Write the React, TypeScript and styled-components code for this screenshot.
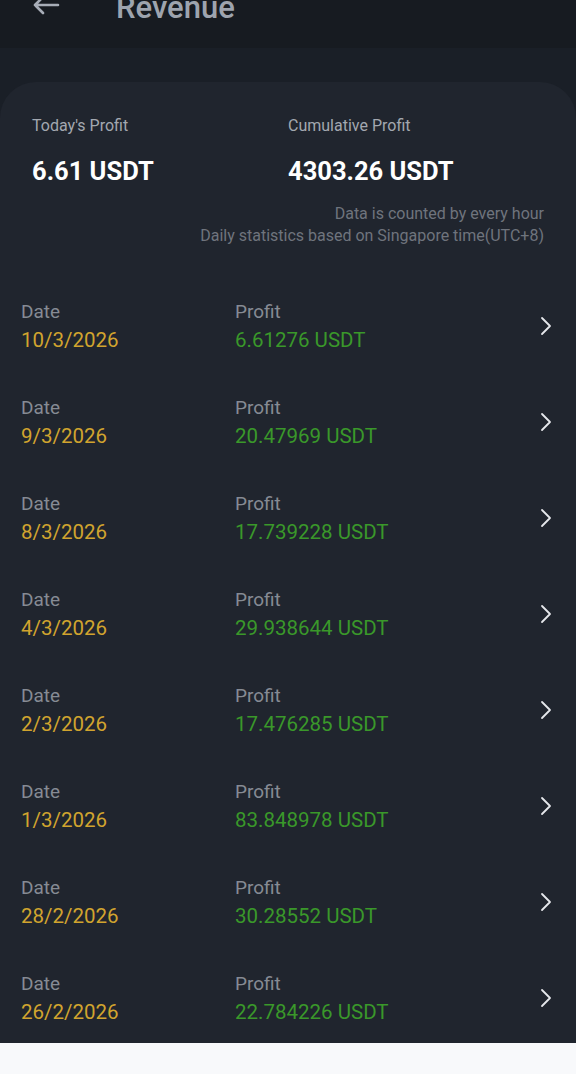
import React from "react";
import styled, { createGlobalStyle } from "styled-components";

const Global = createGlobalStyle`
  html, body { margin: 0; padding: 0; background: #f8f9fb; }
  body { font-family: Roboto, "Noto Sans", sans-serif; }
  * { box-sizing: border-box; }
`;

const Page = styled.div`
  width: 576px;
  background: #1a1f27;
  display: flex;
  flex-direction: column;
`;

const Header = styled.header`
  height: 48px;
  background: #171b21;
  display: flex;
  align-items: flex-start;
  padding-left: 32px;
`;

const BackIcon = styled.svg`
  width: 28px;
  height: 20px;
  margin-top: -5px;
  flex: none;
`;

const Title = styled.h1`
  margin: -8px 0 0 56px;
  font-size: 31px;
  line-height: 31px;
  font-weight: 500;
  color: #9ea4ae;
  white-space: nowrap;
`;

const Card = styled.section`
  margin-top: 34px;
  background: #20252e;
  border-radius: 36px 36px 0 0;
  display: flex;
  flex-direction: column;
`;

const Stats = styled.div`
  padding: 33px 32px 0 32px;
  display: grid;
  grid-template-columns: 1fr 1fr;
`;

const StatCol = styled.div`
  display: flex;
  flex-direction: column;
`;

const StatLabel = styled.div`
  font-size: 16px;
  line-height: 22px;
  color: #a3a8b0;
`;

const StatValue = styled.div`
  margin-top: 21px;
  font-size: 25.5px;
  line-height: 26px;
  font-weight: 700;
  color: #ffffff;
`;

const Notes = styled.div`
  padding: 19px 32px 0 0;
  text-align: right;
  font-size: 16px;
  line-height: 22px;
  color: #6f747d;
`;

const List = styled.div`
  margin-top: 28px;
  display: flex;
  flex-direction: column;
`;

const Row = styled.div`
  height: 96px;
  padding: 25px 24px 0 21px;
  display: grid;
  grid-template-columns: 214px 1fr 20px;
  align-items: start;
`;

const Cell = styled.div`
  display: flex;
  flex-direction: column;
`;

const Label = styled.div`
  font-size: 19px;
  line-height: 24px;
  color: #868b94;
`;

const Value = styled.div<{ $tone: "gold" | "green" }>`
  font-size: 20.5px;
  line-height: 32px;
  color: ${(p) => (p.$tone === "gold" ? "#d1a42e" : "#3a982a")};
`;

const Chevron = styled.svg`
  width: 12px;
  height: 20px;
  margin-top: 16px;
  justify-self: end;
`;

const rows = [
  ["10/3/2026", "6.61276 USDT"],
  ["9/3/2026", "20.47969 USDT"],
  ["8/3/2026", "17.739228 USDT"],
  ["4/3/2026", "29.938644 USDT"],
  ["2/3/2026", "17.476285 USDT"],
  ["1/3/2026", "83.848978 USDT"],
  ["28/2/2026", "30.28552 USDT"],
  ["26/2/2026", "22.784226 USDT"],
];

export default function App() {
  return (
    <>
      <Global />
      <Page>
        <Header>
          <BackIcon viewBox="0 0 28 20">
            <path
              d="M26 10H3M11 2L3 10L11 18"
              fill="none"
              stroke="#a7adb7"
              strokeWidth="2.6"
              strokeLinecap="round"
              strokeLinejoin="round"
            />
          </BackIcon>
          <Title>Revenue</Title>
        </Header>
        <Card>
          <Stats>
            <StatCol>
              <StatLabel>Today's Profit</StatLabel>
              <StatValue>6.61 USDT</StatValue>
            </StatCol>
            <StatCol>
              <StatLabel>Cumulative Profit</StatLabel>
              <StatValue>4303.26 USDT</StatValue>
            </StatCol>
          </Stats>
          <Notes>
            <div>Data is counted by every hour</div>
            <div>Daily statistics based on Singapore time(UTC+8)</div>
          </Notes>
          <List>
            {rows.map(([d, p]) => (
              <Row key={d}>
                <Cell>
                  <Label>Date</Label>
                  <Value $tone="gold">{d}</Value>
                </Cell>
                <Cell>
                  <Label>Profit</Label>
                  <Value $tone="green">{p}</Value>
                </Cell>
                <Chevron viewBox="0 0 12 20">
                  <path
                    d="M2 2L10 10L2 18"
                    fill="none"
                    stroke="#e6e8ec"
                    strokeWidth="1.8"
                    strokeLinecap="round"
                    strokeLinejoin="round"
                  />
                </Chevron>
              </Row>
            ))}
          </List>
        </Card>
      </Page>
    </>
  );
}
